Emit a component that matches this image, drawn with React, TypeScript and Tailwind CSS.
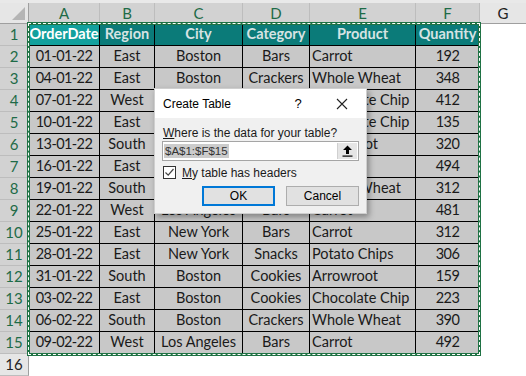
import React from "react";

const rows: string[][] = [
  ["01-01-22", "East", "Boston", "Bars", "Carrot", "192"],
  ["04-01-22", "East", "Boston", "Crackers", "Whole Wheat", "348"],
  ["07-01-22", "West", "Los Angeles", "Cookies", "Chocolate Chip", "412"],
  ["10-01-22", "East", "Boston", "Cookies", "Chocolate Chip", "135"],
  ["13-01-22", "South", "Boston", "Cookies", "Arrowroot", "320"],
  ["16-01-22", "East", "Boston", "Bars", "Carrot", "494"],
  ["19-01-22", "South", "Los Angeles", "Crackers", "Whole Wheat", "312"],
  ["22-01-22", "West", "Los Angeles", "Bars", "Carrot", "481"],
  ["25-01-22", "East", "New York", "Bars", "Carrot", "312"],
  ["28-01-22", "East", "New York", "Snacks", "Potato Chips", "306"],
  ["31-01-22", "South", "Boston", "Cookies", "Arrowroot", "159"],
  ["03-02-22", "East", "Boston", "Cookies", "Chocolate Chip", "223"],
  ["06-02-22", "South", "Boston", "Crackers", "Whole Wheat", "390"],
  ["09-02-22", "West", "Los Angeles", "Bars", "Carrot", "492"],
];

const headers = ["OrderDate", "Region", "City", "Category", "Product", "Quantity"];
const letters = ["A", "B", "C", "D", "E", "F"];

const cellFont = { fontFamily: "Lato, 'Liberation Sans', sans-serif" };
const uiFont = { fontFamily: "'Liberation Sans', Arial, sans-serif" };

export default function App() {
  return (
    <div className="relative w-[526px] h-[376px] overflow-hidden bg-white select-none" style={cellFont}>
      <div className="h-[3px] bg-[#e9e9e9]" />
      <div className="grid grid-cols-[29px_71px_55px_88px_67px_106px_64px_1fr] grid-rows-[21px_repeat(16,22px)] text-[14.5px] leading-none">
        {/* corner */}
        <div className="relative bg-[#e6e6e6] border-r border-b border-[#9f9f9f]">
          <div className="absolute right-[3px] bottom-[3px] w-0 h-0 border-l-[13px] border-l-transparent border-b-[13px] border-b-[#b5b5b5]" />
        </div>
        {letters.map((l) => (
          <div key={l} className="flex items-center justify-center bg-[#d2d2d2] border-r border-b border-r-[#bdbdbd] border-b-[#9f9f9f] text-[#1e6b47] text-[15px]">
            {l}
          </div>
        ))}
        <div className="flex items-center justify-center bg-[#e6e6e6] border-b border-[#9f9f9f] text-[#222] text-[15px]">
          G
        </div>

        {/* header row */}
        <div className="flex items-center justify-center bg-[#d2d2d2] border-r border-b border-r-[#9f9f9f] border-b-[#bdbdbd] text-[#1e6b47] text-[15px]">1</div>
        {headers.map((h, i) => (
          <div
            key={h}
            className={
              "flex items-center justify-center font-bold border-r border-b border-black whitespace-nowrap " +
              (i === 0 ? "bg-[#12a09d] text-white" : "bg-[#0b7b79] text-[#d6e3e3]")
            }
          >
            {h}
          </div>
        ))}
        <div className="bg-white" />

        {rows.map((r, ri) => (
          <React.Fragment key={ri}>
            <div className="flex items-center justify-center bg-[#d2d2d2] border-r border-b border-r-[#9f9f9f] border-b-[#bdbdbd] text-[#1e6b47] text-[15px]">
              {ri + 2}
            </div>
            {r.map((c, ci) => (
              <div
                key={ci}
                className={
                  "flex items-center bg-[#c8c8c8] border-r border-b border-black text-[#1a1a1a] whitespace-nowrap overflow-hidden " +
                  (ci === 4 ? "justify-start pl-[2px]" : "justify-center") +
                  (ci === 0 || ci === 5 ? " tracking-[-0.6px]" : "")
                }
              >
                {c}
              </div>
            ))}
            <div className="bg-white" />
          </React.Fragment>
        ))}

        <div className="flex items-center justify-center bg-[#e6e6e6] border-r border-b border-r-[#9f9f9f] border-b-[#bdbdbd] text-[#222] text-[15px]">16</div>
        <div className="col-span-7 bg-white" />
      </div>

      {/* selection marquee */}
      <div className="absolute left-[27px] top-[22px] w-[454px] h-[334px] border-[3px] border-[#1f7244] pointer-events-none">
        <div className="absolute -inset-[2px] border border-dashed border-white" />
      </div>

      {/* dialog */}
      <div
        className="absolute left-[154px] top-[88px] w-[213px] h-[126px] flex flex-col border border-[#cfcfcf] shadow-[2px_3px_6px_rgba(0,0,0,0.35)] text-[12px] text-[#000]"
        style={uiFont}
      >
        <div className="h-[29px] bg-white flex items-center pl-[8px]">
          <span className="flex-1">Create Table</span>
          <span className="w-[20px] text-center mr-[28px] text-[13px]">?</span>
          <svg width="12" height="12" viewBox="0 0 12 12" className="mr-[18px]">
            <path d="M1 1 L11 11 M11 1 L1 11" stroke="#222" strokeWidth="1.1" />
          </svg>
        </div>
        <div className="flex-1 bg-[#f0f0f0] flex flex-col px-[7px] pt-[7px]">
          <div className="h-[16px] leading-[16px] pl-[1px] text-[#1a1a1a]">
            <span className="underline">W</span>here is the data for your table?
          </div>
          <div className="h-[20px] flex border border-[#a5a5a5] bg-white">
            <div className="flex-1 flex items-center pl-[1px]">
              <span className="bg-[#cccccc] text-[#333] leading-[14px] px-[1px] text-[11.5px]">$A$1:$F$15</span>
            </div>
            <div className="w-[20px] flex items-center justify-center bg-[#e5e5e5] border-l border-[#d0d0d0] my-[1px] mr-[1px]">
              <svg width="11" height="12" viewBox="0 0 11 12">
                <path d="M5.5 0.5 L10 5 L7 5 L7 9 L4 9 L4 5 L1 5 Z" fill="#000" />
                <rect x="0.5" y="10.5" width="10" height="1.2" fill="#000" />
              </svg>
            </div>
          </div>
          <div className="flex items-center mt-[5px] h-[13px]">
            <div className="w-[13px] h-[13px] border border-[#333] bg-white flex items-center justify-center ml-[1px]">
              <svg width="11" height="11" viewBox="0 0 11 11">
                <path d="M1.5 5.5 L4.2 8.2 L9.5 2" fill="none" stroke="#444" strokeWidth="1.2" />
              </svg>
            </div>
            <span className="ml-[6px] text-[#1a1a1a]">
              <span className="underline">M</span>y table has headers
            </span>
          </div>
          <div className="flex justify-end gap-[11px] mt-[7px]">
            <div className="w-[73px] h-[20px] flex items-center justify-center border-2 border-[#0078d7] bg-[#e1e1e1]">OK</div>
            <div className="w-[73px] h-[20px] flex items-center justify-center border border-[#adadad] bg-[#e1e1e1]">Cancel</div>
          </div>
        </div>
      </div>
    </div>
  );
}
